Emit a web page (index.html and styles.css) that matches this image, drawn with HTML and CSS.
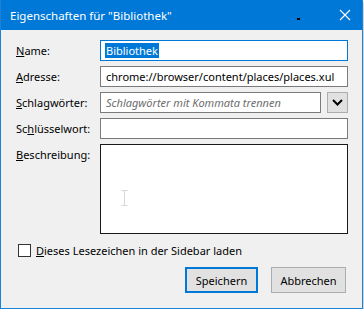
FILE: index.html
```html
<!DOCTYPE html>
<html lang="de">
<head>
  <meta charset="UTF-8">
  <title>Eigenschaften</title>
  <link rel="stylesheet" href="styles.css">
</head>
<body>
  <div class="window">
    <div class="titlebar">
      <span class="title">Eigenschaften für "Bibliothek"</span>
      <span class="dot"></span>
      <svg class="close" width="12" height="12" viewBox="0 0 12 12">
        <path d="M1 1 L11 11 M11 1 L1 11" stroke="#fff" stroke-width="1.1" fill="none"/>
      </svg>
    </div>
    <div class="content">
      <form class="fields">
        <label><u>N</u>ame:</label>
        <div class="field focus"><span class="sel">Bibliothek</span></div>

        <label><u>A</u>dresse:</label>
        <div class="field">chrome://browser/content/places/places.xul</div>

        <label><u>S</u>chlagwörter:</label>
        <div class="combo">
          <div class="field placeholder">Schlagwörter mit Kommata trennen</div>
          <div class="drop">
            <svg width="11" height="7" viewBox="0 0 11 7">
              <path d="M1 1 L5.5 5.5 L10 1" stroke="#000" stroke-width="2" fill="none"/>
            </svg>
          </div>
        </div>

        <label>Sc<u>h</u>lüsselwort:</label>
        <div class="field"></div>

        <label><u>B</u>eschreibung:</label>
        <div class="field area">
          <svg class="ibeam" width="7" height="16" viewBox="0 0 7 16">
            <path d="M0.5 0.5 H6.5 M3.5 0.5 V15.5 M0.5 15.5 H6.5" stroke="#d8d8d8" stroke-width="1" fill="none"/>
          </svg>
        </div>
      </form>

      <div class="check">
        <span class="box"></span>
        <span><u>D</u>ieses Lesezeichen in der Sidebar laden</span>
      </div>

      <div class="buttons">
        <button class="btn default">Speichern</button>
        <button class="btn">Abbrechen</button>
      </div>
    </div>
  </div>
</body>
</html>
```

FILE: styles.css
```css
body { margin: 0; background: #fff; font-family: "Noto Sans", sans-serif; font-size: 11px; color: #000; }
.window { width: 361px; height: 308px; border: 1px solid #1883d7; border-top: none; background: #f0f0f0; box-shadow: 1px 2px 2px rgba(0,0,0,0.25); }
.titlebar { height: 30px; background: #0078d7; color: #fff; display: flex; align-items: center; padding: 0 11px 0 9px; position: relative; }
.title { flex: 1; font-size: 11.5px; }
.dot { position: absolute; left: 296px; top: 18px; width: 3px; height: 2px; background: #000; }
.close { margin-top: -1px; }

.content { padding: 10px 14px 0 15px; }
.fields { display: grid; grid-template-columns: 84px 1fr; row-gap: 5px; }
.fields label { line-height: 21px; height: 21px; }
.field { height: 21px; box-sizing: border-box; border: 1px solid #7a7a7a; background: #fff; padding: 0 5px; line-height: 19px; white-space: nowrap; overflow: hidden; }
.field.focus { border-color: #0078d7; padding-left: 4px; }
.sel { background: #0078d7; color: #fff; padding: 0 1px; display: inline-block; line-height: 15px; }
.placeholder { color: #6d6d6d; font-style: italic; flex: 1; }
.combo { display: flex; gap: 6px; }
.drop { width: 21px; height: 21px; box-sizing: border-box; background: #e1e1e1; border: 1px solid #adadad; display: flex; align-items: center; justify-content: center; }
.area { height: 90px; border-color: #1a1a1a; position: relative; }
.ibeam { position: absolute; left: 20px; top: 45px; }

.check { display: flex; align-items: center; gap: 5px; margin: 10px 0 0 2px; line-height: 13px; }
.box { width: 11px; height: 11px; border: 1px solid #333; background: #fff; }

.buttons { display: flex; justify-content: flex-end; gap: 13px; margin-top: 10px; padding-right: 2px; }
.btn { height: 26px; font: inherit; background: #e1e1e1; border: 1px solid #adadad; padding: 0; color: #000; }
.btn.default { width: 73px; border: 2px solid #0078d7; }
.btn:last-child { width: 75px; }
```
